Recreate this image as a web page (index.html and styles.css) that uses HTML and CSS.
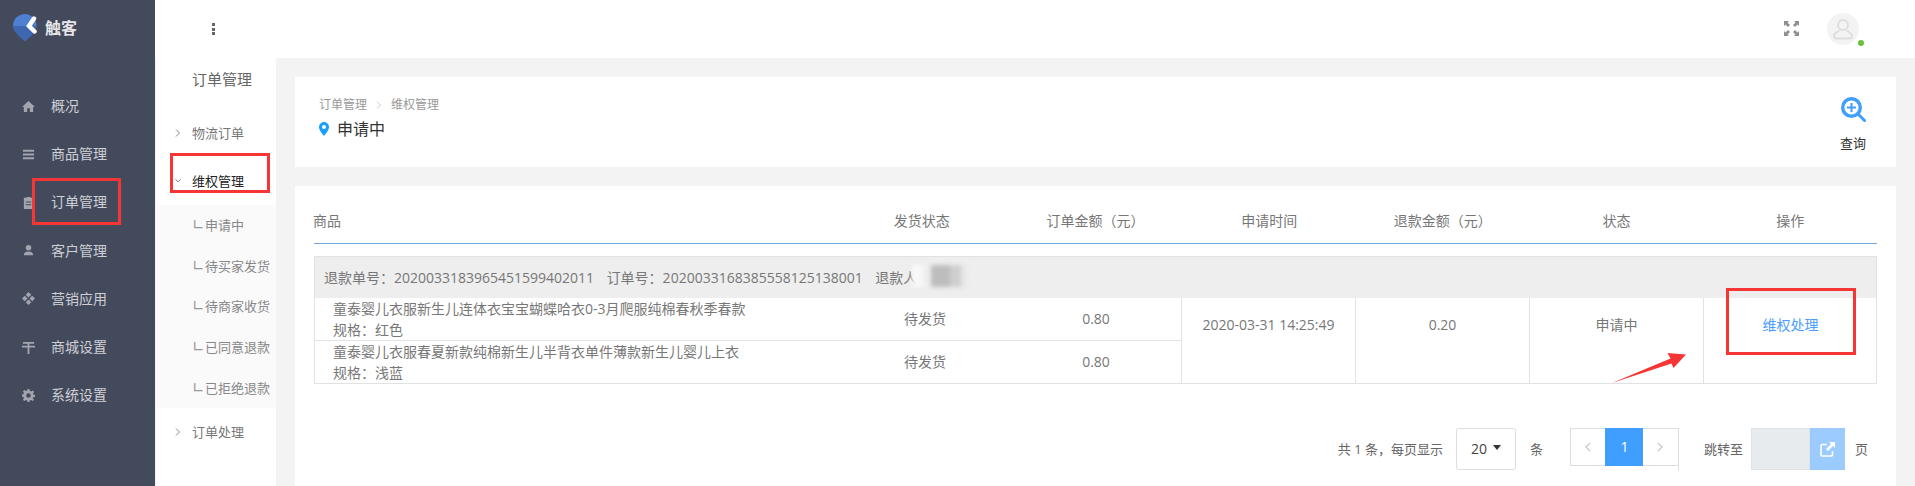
FILE: index.html
```html
<!DOCTYPE html>
<html lang="zh-CN">
<head>
<meta charset="utf-8">
<title>触客</title>
<link rel="stylesheet" href="styles.css">
</head>
<body>
<div class="app">
  <aside class="sidebar">
    <div class="brand">
      <svg class="logo" viewBox="0 0 24 28" width="24" height="28">
        <path d="M12 1C5.500 1 0 6 0 12.500 0 18 7 24 12 28 17 24 23.500 18 23.500 12.500 23.500 6 18 1 12 1Z" fill="#4f7fd0"/>
        <path d="M0 13C0 18 7 24 12 28 17 24 23.500 18 23.500 13Z" fill="#3f66b0"/>
        <path d="M21 5.500 16 13 21.500 18.500" fill="none" stroke="#fff" stroke-width="4.500" stroke-linecap="round"/>
      </svg>
      <span class="brand-name">触客</span>
    </div>
    <nav class="nav">
      <a class="nav-item"><svg class="nav-icon" viewBox="0 0 14 14"><path d="M7 1 0 7.500h2V13h3.500V9h3v4H12V7.500h2Z"/></svg>概况</a>
      <a class="nav-item"><svg class="nav-icon" viewBox="0 0 14 14"><path d="M1 2h12v2H1ZM1 6h12v2H1ZM1 10h12v2H1Z"/></svg>商品管理</a>
      <a class="nav-item"><svg class="nav-icon" viewBox="0 0 14 14"><path d="M2 2h3V1h4v1h3v12H2Zm2 4v1h6V6Zm0 3v1h6V9Z" fill-rule="evenodd"/></svg>订单管理</a>
      <a class="nav-item"><svg class="nav-icon" viewBox="0 0 14 14"><circle cx="7" cy="4" r="3"/><path d="M2 12c0-3 2-4 5-4s5 1 5 4Z"/></svg>客户管理</a>
      <a class="nav-item"><svg class="nav-icon" viewBox="0 0 14 14"><path d="M7 0l3 3-3 3-3-3ZM3 4l3 3-3 3-3-3ZM11 4l3 3-3 3-3-3ZM7 8l3 3-3 3-3-3Z"/></svg>营销应用</a>
      <a class="nav-item"><svg class="nav-icon" viewBox="0 0 14 14"><path d="M1 1h12v2H8v2h6v2H8v7H6V7H0V5h6V3H1Z"/></svg>商城设置</a>
      <a class="nav-item"><svg class="nav-icon" viewBox="0 0 14 14"><path fill-rule="evenodd" d="M6 0h2l.4 2 1.500.6L11.600 1.500 13 3l-1.100 1.700.6 1.400 1.500.4v2l-1.900.4-.6 1.400L13 11.500 11.500 13l-1.600-1.100-1.500.6L8 14H6l-.4-1.500-1.500-.6L2.500 13 1 11.500l1.100-1.600-.6-1.400L0 8V6l1.500-.4.6-1.400L1 2.500 2.500 1l1.600 1.100 1.500-.6ZM7 4.500a2.500 2.500 0 1 0 0 5 2.500 2.500 0 0 0 0-5Z"/></svg>系统设置</a>
    </nav>
  </aside>

  <div class="content">
    <header class="topbar">
      <div class="kebab"><i></i><i></i><i></i></div>
      <div class="top-right">
        <svg class="fullscreen" viewBox="0 0 15 15" width="15" height="15"><path d="M0 0h5L3.500 1.500 6 4 4 6 1.500 3.500 0 5ZM15 0v5l-1.500-1.500L11 6 9 4l2.500-2.500L10 0ZM0 15v-5l1.500 1.500L4 9l2 2-2.500 2.500L5 15ZM15 15h-5l1.500-1.500L9 11l2-2 2.500 2.500L15 10Z"/></svg>
        <div class="avatar">
          <svg viewBox="0 0 32 32" width="32" height="32"><circle cx="16" cy="12" r="5" fill="none" stroke="#dedede" stroke-width="2"/><path d="M12 17c.5 2-5 2.500-5 6 0 1.500 1 2.500 2.500 2.500h13c1.500 0 2.500-1 2.500-2.500 0-3.500-5.500-4-5-6" fill="none" stroke="#dedede" stroke-width="2"/></svg>
          <span class="online"></span>
        </div>
      </div>
    </header>

    <div class="body-row">
      <aside class="subnav">
        <div class="subnav-title">订单管理</div>
        <a class="sub-item"><svg class="chev" viewBox="0 0 6 8" width="6" height="8"><path d="M1 .5 4.500 4 1 7.500" fill="none" stroke="#888"/></svg>物流订单</a>
        <a class="sub-item sub-open"><svg class="chev" viewBox="0 0 7 6" width="6" height="8"><path d="M.5 1 3.500 4 6.500 1" fill="none" stroke="#666"/></svg>维权管理</a>
        <div class="sub-list">
          <a class="leaf"><span class="leaf-mark">∟</span>申请中</a>
          <a class="leaf"><span class="leaf-mark">∟</span>待买家发货</a>
          <a class="leaf"><span class="leaf-mark">∟</span>待商家收货</a>
          <a class="leaf"><span class="leaf-mark">∟</span>已同意退款</a>
          <a class="leaf"><span class="leaf-mark">∟</span>已拒绝退款</a>
        </div>
        <a class="sub-item"><svg class="chev" viewBox="0 0 6 8" width="6" height="8"><path d="M1 .5 4.500 4 1 7.500" fill="none" stroke="#888"/></svg>订单处理</a>
      </aside>

      <main class="main">
        <section class="card card-head">
          <div>
            <div class="crumbs"><span>订单管理</span><svg viewBox="0 0 6 8" width="6" height="8"><path d="M1 .5 4.500 4 1 7.500" fill="none" stroke="#ccc"/></svg><span>维权管理</span></div>
            <div class="page-title">
              <svg viewBox="0 0 10 14" width="10" height="14"><path fill-rule="evenodd" d="M5 0a5 5 0 0 0-5 5c0 3 3 6.500 5 9 2-2.500 5-6 5-9a5 5 0 0 0-5-5Zm0 3a2 2 0 1 1 0 4 2 2 0 0 1 0-4Z" fill="#1a9fff"/></svg>
              <span>申请中</span>
            </div>
          </div>
          <div class="query">
            <svg viewBox="0 0 25 25" width="25" height="25"><circle cx="10.500" cy="10.500" r="8.800" fill="none" stroke="#409eff" stroke-width="3.400"/><path d="M6 10.500h9M10.500 6v9" stroke="#409eff" stroke-width="2"/><path d="M17 17l6.500 6.500" stroke="#409eff" stroke-width="3" stroke-linecap="round"/></svg>
            <span>查询</span>
          </div>
        </section>

        <section class="card card-table">
          <div class="thead">
            <div class="th-goods">商品</div>
            <div>发货状态</div>
            <div>订单金额（元）</div>
            <div>申请时间</div>
            <div>退款金额（元）</div>
            <div>状态</div>
            <div>操作</div>
          </div>

          <div class="order">
            <div class="order-head">
              <span>退款单号：2020033183965451599402011</span>
              <span>订单号：2020033168385558125138001</span>
              <span>退款人</span>
              <span class="smudge"></span>
            </div>
            <div class="order-body">
              <div class="lines">
                <div class="line">
                  <div class="goods">童泰婴儿衣服新生儿连体衣宝宝蝴蝶哈衣0-3月爬服纯棉春秋季春款<br>规格：红色</div>
                  <div class="cell-mid">待发货</div>
                  <div class="cell-mid">0.80</div>
                </div>
                <div class="line">
                  <div class="goods">童泰婴儿衣服春夏新款纯棉新生儿半背衣单件薄款新生儿婴儿上衣<br>规格：浅蓝</div>
                  <div class="cell-mid">待发货</div>
                  <div class="cell-mid">0.80</div>
                </div>
              </div>
              <div class="cell">2020-03-31 14:25:49</div>
              <div class="cell">0.20</div>
              <div class="cell">申请中</div>
              <div class="cell"><a class="link">维权处理</a></div>
            </div>
          </div>

          <div class="pager-row">
            <span>共 1 条，每页显示</span>
            <div class="page-size">20<i class="caret"></i></div>
            <span class="unit">条</span>
            <div class="pager">
              <span class="pg"><svg viewBox="0 0 6 10" width="6" height="10"><path d="M5 1 1 5l4 4" fill="none" stroke="#c8c8c8" stroke-width="1.300"/></svg></span>
              <span class="pg pg-on">1</span>
              <span class="pg pg-next"><svg viewBox="0 0 6 10" width="6" height="10"><path d="M1 1l4 4-4 4" fill="none" stroke="#c8c8c8" stroke-width="1.300"/></svg></span>
            </div>
            <span class="jump">跳转至</span>
            <div class="jump-input"></div>
            <div class="jump-btn"><svg viewBox="0 0 15 15" width="15" height="15"><path d="M7 2.500H2.500a1.500 1.500 0 0 0-1.500 1.500v8.500A1.500 1.500 0 0 0 2.500 14H11a1.500 1.500 0 0 0 1.500-1.500V9" fill="none" stroke="#fff" stroke-width="1.600"/><path d="M9 0h6v6l-2-2-5 5-2-2 5-5Z" fill="#fff"/></svg></div>
            <span class="last">页</span>
          </div>
        </section>
      </main>
    </div>
  </div>

  <div class="mark mark-nav"></div>
  <div class="mark mark-sub"></div>
  <div class="mark mark-action"></div>
  <svg class="mark-arrow" viewBox="0 0 76 32" width="76" height="32"><path d="M1 30 59.500 5.500 56.500 0 75 1.500 62.500 15 60.500 10.500Z" fill="#f63535"/></svg>
</div>
</body>
</html>
```

FILE: styles.css
```css
* { box-sizing: border-box; }
html, body { margin: 0; height: 100%; overflow: hidden; }
body {
  font-family: "Open Sans", "Noto Sans CJK SC", sans-serif;
  font-size: 14px;
  color: #777;
  background: #f3f3f3;
}
.app { position: relative; display: flex; width: 1915px; height: 486px; overflow: hidden; }

/* sidebar */
.sidebar { width: 155px; flex: none; background: #434a5c; }
.brand { display: flex; align-items: flex-start; height: 82px; padding: 13px 0 0 13px; }
.logo { flex: none; }
.brand-name { margin: 5px 0 0 8px; font-size: 16px; line-height: 20px; font-weight: 700; color: #e6e6e8; }
.nav { display: flex; flex-direction: column; }
.nav-item { display: flex; align-items: center; height: 48.200px; padding-left: 22px; color: #ced0d5; line-height: 20px; }
.nav-icon { width: 13px; height: 13px; margin-right: 16px; fill: #a2a5ae; flex: none; }

/* top bar */
.content { flex: 1; display: flex; flex-direction: column; min-width: 0; }
.topbar {
  display: flex; align-items: center; justify-content: space-between;
  height: 58px; flex: none; background: #fff;
  padding: 0 56px 0 57px;
}
.kebab { display: flex; flex-direction: column; gap: 1.500px; }
.kebab i { display: block; width: 3px; height: 3px; background: #666; }
.top-right { display: flex; align-items: center; gap: 28px; }
.fullscreen { fill: #8f8f8f; margin-top: -2px; }
.avatar { position: relative; width: 32px; height: 32px; border-radius: 50%; background: #f3f3f3; }
.avatar svg { display: block; }
.online { position: absolute; right: -5px; bottom: -1px; width: 6px; height: 6px; border-radius: 50%; background: #67c23a; }

.body-row { flex: 1; display: flex; min-height: 0; }

/* sub navigation */
.subnav { width: 120px; flex: none; background: #fff; margin-left: 1px; }
.subnav-title { height: 51px; padding: 11px 0 0 36px; font-size: 15px; line-height: 20px; color: #666; }
.sub-item { display: flex; align-items: center; height: 48px; padding-left: 19px; font-size: 13px; line-height: 20px; color: #777; }
.sub-open { color: #222; }
.chev { margin-right: 11px; flex: none; }
.sub-list { background: #fafafa; }
.leaf { display: flex; align-items: center; height: 40.600px; padding-left: 37px; font-size: 13px; line-height: 20px; color: #888; white-space: nowrap; }
.leaf-mark { width: 12px; margin-left: -1px; margin-right: 1px; font-family: "DejaVu Sans", sans-serif; font-size: 15px; color: #999; flex: none; }

/* main */
.main { flex: 1; min-width: 0; padding: 19px 19px 0; display: flex; flex-direction: column; gap: 19px; }
.card { background: #fff; }
.card-head { height: 90px; flex: none; display: flex; justify-content: space-between; padding: 20px 30px 0 24px; }
.crumbs { display: flex; align-items: center; gap: 9px; font-size: 12px; line-height: 16px; color: #999; }
.page-title { display: flex; align-items: center; gap: 8px; margin-top: 5px; font-size: 16px; line-height: 22px; color: #333; }
.query { display: flex; flex-direction: column; align-items: center; width: 26px; font-size: 13px; line-height: 18px; color: #333; }
.query span { margin-top: 12px; }
.card-table { flex: 1; padding: 13px 19px 0; }

.thead {
  display: grid; grid-template-columns: 3fr repeat(6, 1fr);
  height: 45px; align-items: center; text-align: center;
  border-bottom: 1px solid #6ea9e8; line-height: 20px;
}
.th-goods { text-align: left; margin-left: -1px; }

.order { position: relative; margin-top: 12px; border: 1px solid #e2e2e2; }
.order-head { display: flex; align-items: center; gap: 12.500px; height: 41px; padding-left: 9px; background: #eee; line-height: 20px; white-space: nowrap; }
.smudge {
  position: absolute; left: 597px; top: 8px; width: 54px; height: 22px;
  background: linear-gradient(90deg, #f8f8f8 0 20%, #eee 20% 36%, #bdbdbd 36% 70%, #cfcfcf 70% 90%, #e6e6e6 90%);
  filter: blur(2px);
}
.order-body { display: grid; grid-template-columns: 866px repeat(4, 174px); height: 85px; }
.lines { display: flex; flex-direction: column; }
.line { display: grid; grid-template-columns: 524px 172px 170px; height: 43px; border-bottom: 1px solid #e2e2e2; }
.line:last-child { height: 42px; border-bottom: 0; }
.goods { padding-left: 18px; line-height: 21px; white-space: nowrap; }
.cell-mid { line-height: 42px; text-align: center; }
.cell { border-left: 1px solid #e2e2e2; text-align: center; line-height: 53px; }
.link { color: #4a9dff; }

/* pagination */
.pager-row { display: flex; align-items: flex-start; justify-content: flex-end; margin-top: 44px; padding-right: 9px; font-size: 13px; line-height: 42px; color: #666; }
.page-size { display: flex; align-items: center; justify-content: center; gap: 6px; width: 60px; height: 42px; margin-left: 13px; border: 1px solid #ddd; border-radius: 3px; color: #444; font-size: 14px; }
.caret { width: 0; height: 0; margin-top: -3px; border: 4px solid transparent; border-top: 5px solid #333; border-bottom: 0; }
.unit { margin-left: 14px; }
.pager { display: flex; height: 42px; margin-left: 27px; border-right: 1px solid #ddd; }
.pg { display: flex; align-items: center; justify-content: center; width: 35px; height: 38px; border: 1px solid #ddd; border-right: 0; }
.pg-on { width: 38px; background: #409eff; border-color: #409eff; color: #fff; font-size: 14px; }
.pg-next { width: 35px; border-left: 0; }
.jump { margin-left: 25px; }
.jump-input { width: 59px; height: 42px; margin-left: 8px; background: #e8ebee; border: 1px solid #e0e3e6; }
.jump-btn { display: flex; align-items: center; justify-content: center; width: 35px; height: 42px; background: #9ccbff; }
.last { margin-left: 10px; }

/* annotations drawn over the screenshot */
.mark { position: absolute; border: 3px solid #f63535; }
.mark-nav { left: 32px; top: 178px; width: 89px; height: 47px; }
.mark-sub { left: 170px; top: 153px; width: 100px; height: 40px; }
.mark-action { left: 1726px; top: 288px; width: 130px; height: 67px; }
.mark-arrow { position: absolute; left: 1611px; top: 353px; }
```
